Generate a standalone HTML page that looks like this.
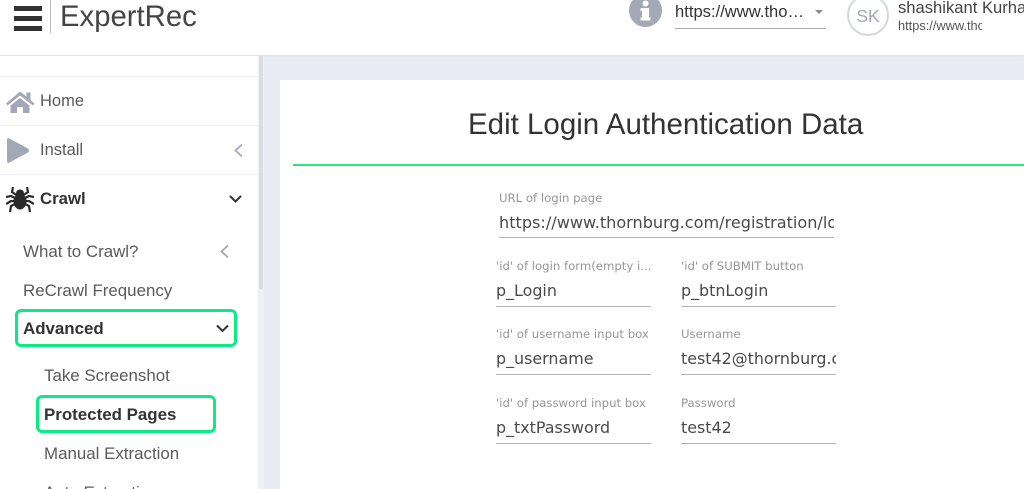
<!DOCTYPE html>
<html><head><meta charset="utf-8">
<style>
html,body{margin:0;padding:0;width:1024px;height:489px;overflow:hidden;background:#e9ecf5}
body{position:relative;font-family:"Liberation Sans",sans-serif;color:#4a4a4a}
#w{position:absolute;left:0;top:0;width:1024px;height:489px;overflow:hidden;filter:blur(.3px)}
.a{position:absolute;white-space:nowrap}
.t{position:absolute;white-space:nowrap;line-height:20px;font-size:16.5px;color:#5a5a5a}
.s{font-size:16.9px}
.b{font-weight:bold;color:#333}
.l{position:absolute;font-family:"DejaVu Sans",sans-serif;font-size:11.7px;color:#969696;line-height:14px;white-space:nowrap}
.v{position:absolute;font-family:"DejaVu Sans",sans-serif;font-size:15.9px;color:#4a4a4a;line-height:20px;white-space:nowrap;overflow:hidden}
.u{position:absolute;height:1px;background:#b5b5b5}
.sep{position:absolute;left:0;width:258px;height:1px;background:#f0f0f2}
.box{position:absolute;border:3px solid #0aeb85;border-radius:6px;box-sizing:border-box;background:#fff}
</style></head><body><div id="w">
<div class="a" style="left:0;top:0;width:1024px;height:55px;background:#fff;box-shadow:0 1px 3px rgba(0,0,0,.06)"></div>
<div class="a" style="left:14px;top:6px;width:28px;height:5px;background:#333"></div>
<div class="a" style="left:14px;top:16px;width:28px;height:5px;background:#333"></div>
<div class="a" style="left:14px;top:26px;width:28px;height:5px;background:#333"></div>
<div class="a" style="left:50px;top:0;width:1px;height:33px;background:#bbb"></div>
<div class="a" style="left:60px;top:-3px;font-size:29.3px;line-height:40px;color:#444">ExpertRec</div>

<svg class="a" style="left:629px;top:-6px" width="33" height="33" viewBox="0 0 33 33"><circle cx="16.5" cy="16.5" r="16.5" fill="#a5a9b6"/><rect x="13" y="14" width="7" height="12" fill="#fff"/><rect x="11.5" y="14" width="8" height="3" fill="#fff"/><rect x="11.5" y="23.5" width="10" height="3" fill="#fff"/><circle cx="16.5" cy="9.5" r="3" fill="#fff"/></svg>
<div class="a" style="left:675px;top:2px;font-size:16.6px;line-height:20px;color:#333">https://www.tho…</div>
<div class="a" style="left:815px;top:10px;width:0;height:0;border-left:4px solid transparent;border-right:4px solid transparent;border-top:4px solid #888"></div>
<div class="a" style="left:675px;top:28px;width:151px;height:1px;background:#aaa"></div>
<div class="a" style="left:847px;top:-6px;width:38px;height:38px;border:2px solid #d4d7e0;border-radius:50%;text-align:center;line-height:41px;font-size:17.5px;color:#a3a7b3">SK</div>
<div class="a" style="left:898px;top:-2px;font-size:16.6px;line-height:20px;color:#444;width:126px;overflow:hidden">shashikant Kurhade</div>
<div class="a" style="left:898px;top:18px;font-size:12.8px;line-height:16px;color:#555;width:84px;overflow:hidden">https://www.thornburg</div>

<div class="a" style="left:0;top:56px;width:258px;height:433px;background:#fff"></div>
<div class="a" style="left:258px;top:56px;width:6px;height:433px;background:#f1f1f4"></div>
<div class="a" style="left:259px;top:56px;width:4px;height:233px;background:#dcdde2"></div>
<div class="a" style="left:280px;top:80px;width:744px;height:409px;background:#fff"></div>

<div class="sep" style="top:76px"></div>
<div class="sep" style="top:125px"></div>
<div class="sep" style="top:174px"></div>

<svg class="a" style="left:6px;top:90px" width="29" height="24" viewBox="0 0 29 24"><path d="M14 1.500 0 13.500l1.500 2L14 5.500l13 10 1.500-2-4-3.500V2.500h-4v4z" fill="#a3a8b8"/><path d="M4.500 15.500 14 8l9.500 7.500V23H17v-6h-6v6H4.500z" fill="#a3a8b8"/></svg>
<div class="t" style="left:40px;top:91px">Home</div>

<svg class="a" style="left:6px;top:137px" width="24" height="27" viewBox="0 0 24 27"><path d="M2.500 1 22 11.500q2 2 0 4L2.500 26Q1 26 1 24V3Q1 1 2.500 1z" fill="#a3a8b8"/></svg>
<div class="t" style="left:40px;top:140px">Install</div>
<svg class="a" style="left:232px;top:143px" width="14" height="15" viewBox="0 0 14 15"><path d="M10 1.500 3.500 7.500l6.500 6" fill="none" stroke="#a3a8b8" stroke-width="1.800"/></svg>

<svg class="a" style="left:6px;top:187px" width="28" height="26" viewBox="0 0 28 26"><g fill="none" stroke="#2b2b2b" stroke-width="2.200"><path d="M7 0 6 5l6 4M21 0l1 5-6 4M0 10l5-1 6 3M28 10l-5-1-6 3M0 17l5-3h6M28 17l-5-3h-6M4 25l1-6 6-3M24 25l-1-6-6-3"/></g><ellipse cx="14" cy="6" rx="4" ry="3.500" fill="#2b2b2b"/><ellipse cx="14" cy="14.500" rx="6.500" ry="8" fill="#2b2b2b"/></svg>
<div class="t b" style="left:40px;top:189px;font-size:16.800px">Crawl</div>
<svg class="a" style="left:228px;top:192px" width="15" height="14" viewBox="0 0 15 14"><path d="M2 4 7.500 9.500 13 4" fill="none" stroke="#333" stroke-width="2"/></svg>

<div class="t s" style="left:23px;top:242px">What to Crawl?</div>
<svg class="a" style="left:218px;top:244px" width="14" height="15" viewBox="0 0 14 15"><path d="M10 1.500 3.500 7.500l6.500 6" fill="none" stroke="#a3a8b8" stroke-width="1.800"/></svg>
<div class="t s" style="left:23px;top:281px">ReCrawl Frequency</div>

<div class="box" style="left:15px;top:309px;width:222px;height:38px"></div>
<div class="t b s" style="left:23px;top:319px">Advanced</div>
<svg class="a" style="left:215px;top:322px" width="15" height="14" viewBox="0 0 15 14"><path d="M2 3.500 7.500 9 13 3.500" fill="none" stroke="#333" stroke-width="2"/></svg>

<div class="t s" style="left:44px;top:366px">Take Screenshot</div>
<div class="box" style="left:36px;top:395px;width:180px;height:38px"></div>
<div class="t b s" style="left:44px;top:405px">Protected Pages</div>
<div class="t s" style="left:44px;top:444px">Manual Extraction</div>
<div class="t s" style="left:44px;top:483px">Auto Extraction</div>

<div class="a" style="left:468px;top:105px;font-size:29.500px;line-height:40px;color:#333">Edit Login Authentication Data</div>
<div class="a" style="left:293px;top:164px;width:731px;height:2px;background:#2ae87e"></div>

<div class="l" style="left:499px;top:191px">URL of login page</div>
<div class="v" style="left:499px;top:213px;width:335px;font-size:16.1px">https://www.thornburg.com/registration/login</div>
<div class="u" style="left:499px;top:237px;width:335px"></div>

<div class="l" style="left:496px;top:259px">'id' of login form(empty i...</div>
<div class="v" style="left:496px;top:281px;width:155px">p_Login</div>
<div class="u" style="left:496px;top:306px;width:155px"></div>
<div class="l" style="left:681px;top:259px">'id' of SUBMIT button</div>
<div class="v" style="left:681px;top:281px;width:155px">p_btnLogin</div>
<div class="u" style="left:681px;top:306px;width:155px"></div>

<div class="l" style="left:496px;top:327px">'id' of username input box</div>
<div class="v" style="left:496px;top:349px;width:155px">p_username</div>
<div class="u" style="left:496px;top:374px;width:155px"></div>
<div class="l" style="left:681px;top:327px">Username</div>
<div class="v" style="left:681px;top:349px;width:155px">test42@thornburg.com</div>
<div class="u" style="left:681px;top:374px;width:155px"></div>

<div class="l" style="left:496px;top:396px">'id' of password input box</div>
<div class="v" style="left:496px;top:418px;width:155px">p_txtPassword</div>
<div class="u" style="left:496px;top:443px;width:155px"></div>
<div class="l" style="left:681px;top:396px">Password</div>
<div class="v" style="left:681px;top:418px;width:155px">test42</div>
<div class="u" style="left:681px;top:443px;width:155px"></div>
</div></body></html>
